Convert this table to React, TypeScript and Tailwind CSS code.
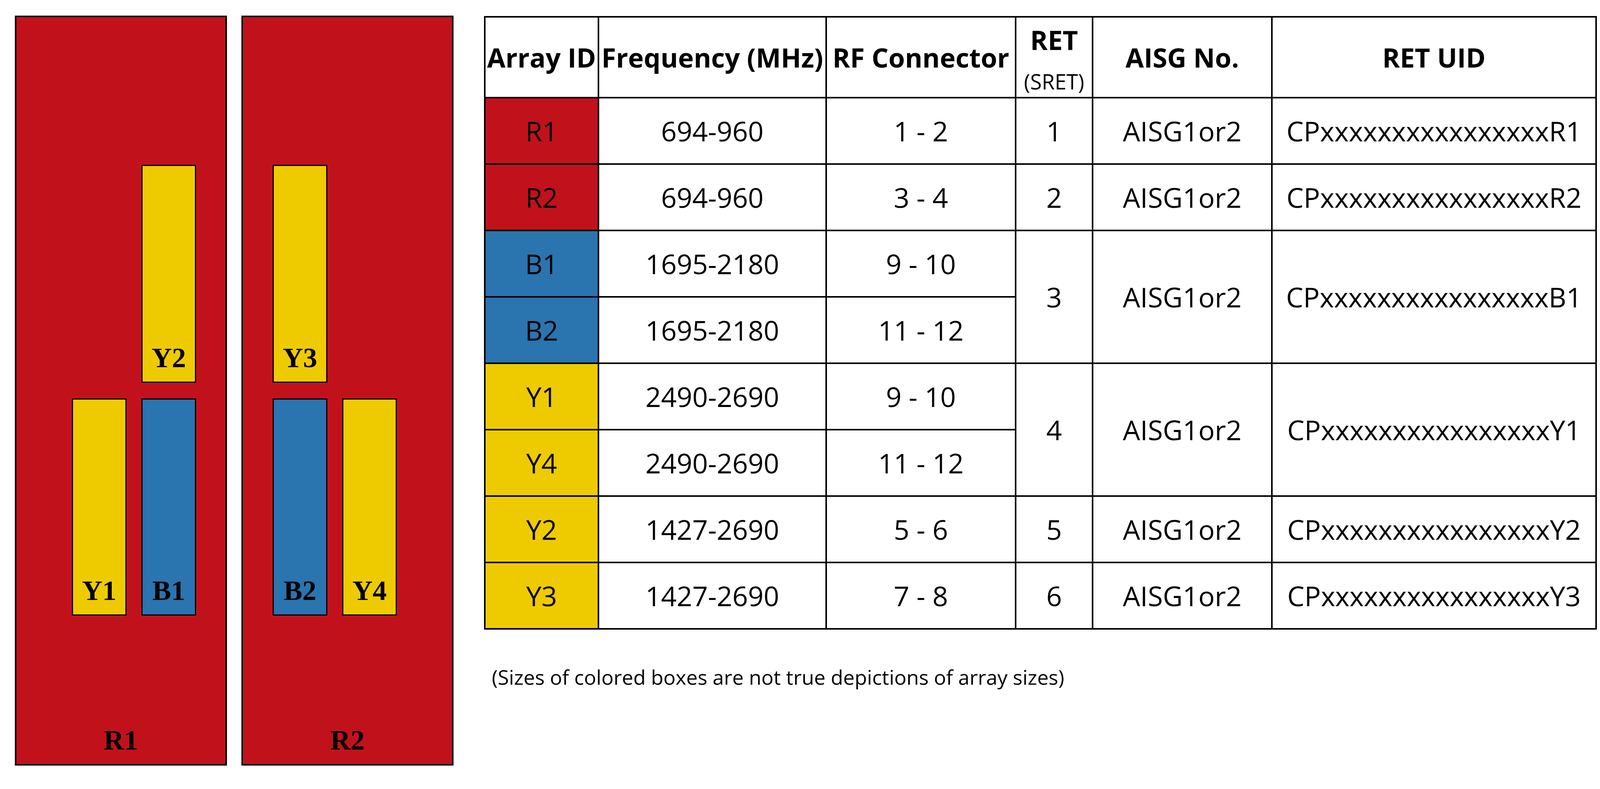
const RED = 'bg-[#C1121C]';
const BLUE = 'bg-[#2A74B0]';
const YELLOW = 'bg-[#EECB00]';
const X16 = 'x'.repeat(16);

function Bar({ label, color, pos }: { label: string; color: string; pos: string }) {
  return (
    <div className={`${color} ${pos} border-[3px] border-black flex items-end justify-center pb-[25px]`}>
      <span className="text-[72px] leading-none font-bold">{label}</span>
    </div>
  );
}

function Panel({ name, pad, children }: { name: string; pad: string; children: React.ReactNode }) {
  return (
    <div className={`${RED} w-[543px] h-[1920px] border-4 border-black flex flex-col font-['Liberation_Serif',serif]`}>
      <div className={`${pad} pt-[378px] grid grid-cols-[140px_140px] grid-rows-[558px_556px] gap-x-[38px] gap-y-[40px]`}>
        {children}
      </div>
      <div className="mt-auto pb-[25px] text-center text-[72px] leading-none font-bold">{name}</div>
    </div>
  );
}

const rows = [
  { id: 'R1', color: RED, freq: '694-960', rf: '1 - 2', ret: '1', uid: `CP${X16}R1`, span: 1 },
  { id: 'R2', color: RED, freq: '694-960', rf: '3 - 4', ret: '2', uid: `CP${X16}R2`, span: 1 },
  { id: 'B1', color: BLUE, freq: '1695-2180', rf: '9 - 10', ret: '3', uid: `CP${X16}B1`, span: 2 },
  { id: 'B2', color: BLUE, freq: '1695-2180', rf: '11 - 12', ret: '', uid: '', span: 0 },
  { id: 'Y1', color: YELLOW, freq: '2490-2690', rf: '9 - 10', ret: '4', uid: `CP${X16}Y1`, span: 2 },
  { id: 'Y4', color: YELLOW, freq: '2490-2690', rf: '11 - 12', ret: '', uid: '', span: 0 },
  { id: 'Y2', color: YELLOW, freq: '1427-2690', rf: '5 - 6', ret: '5', uid: `CP${X16}Y2`, span: 1 },
  { id: 'Y3', color: YELLOW, freq: '1427-2690', rf: '7 - 8', ret: '6', uid: `CP${X16}Y3`, span: 1 },
];

const cell = 'border-4 border-black text-center align-middle p-0';

export default function App() {
  return (
    <div className="w-full h-[2020px] bg-white flex items-start pt-[40px] pl-[38px] text-black">
      <div className="flex gap-[37px]">
        <Panel name="R1" pad="pl-[142px]">
          <Bar label="Y2" color={YELLOW} pos="col-start-2 row-start-1" />
          <Bar label="Y1" color={YELLOW} pos="col-start-1 row-start-2" />
          <Bar label="B1" color={BLUE} pos="col-start-2 row-start-2" />
        </Panel>
        <Panel name="R2" pad="pl-[76px]">
          <Bar label="Y3" color={YELLOW} pos="col-start-1 row-start-1" />
          <Bar label="B2" color={BLUE} pos="col-start-1 row-start-2" />
          <Bar label="Y4" color={YELLOW} pos="col-start-2 row-start-2" />
        </Panel>
      </div>

      <div className="ml-[78px] pt-[1px] font-['Open_Sans',sans-serif]">
        <table className="table-fixed border-collapse w-[2845px] border-4 border-black">
          <colgroup>
            <col className="w-[291px]" />
            <col className="w-[583px]" />
            <col className="w-[485px]" />
            <col className="w-[197px]" />
            <col className="w-[459px]" />
            <col className="w-[830px]" />
          </colgroup>
          <thead>
            <tr className="h-[207px] text-[68px] font-bold">
              <th className={`${cell} whitespace-nowrap`}>Array ID</th>
              <th className={`${cell} whitespace-nowrap`}>Frequency (MHz)</th>
              <th className={`${cell} whitespace-nowrap`}>RF Connector</th>
              <th className={cell}>
                <div className="leading-[80px] pt-[6px]">RET</div>
                <div className="text-[54px] font-normal leading-[60px] mt-[36px]">(SRET)</div>
              </th>
              <th className={`${cell} whitespace-nowrap`}>AISG No.</th>
              <th className={`${cell} whitespace-nowrap`}>RET UID</th>
            </tr>
          </thead>
          <tbody className="text-[70px]">
            {rows.map(r => (
              <tr key={r.id} className="h-[170px]">
                <td className={`${cell} ${r.color}`}>{r.id}</td>
                <td className={cell}>{r.freq}</td>
                <td className={cell}>{r.rf}</td>
                {r.span > 0 && (
                  <>
                    <td className={cell} rowSpan={r.span}>{r.ret}</td>
                    <td className={cell} rowSpan={r.span}>AISG1or2</td>
                    <td className={`${cell} whitespace-nowrap`} rowSpan={r.span}>{r.uid}</td>
                  </>
                )}
              </tr>
            ))}
          </tbody>
        </table>
        <p className="mt-[95px] ml-[20px] text-[52px] leading-[52px]">
          (Sizes of colored boxes are not true depictions of array sizes)
        </p>
      </div>
    </div>
  );
}
